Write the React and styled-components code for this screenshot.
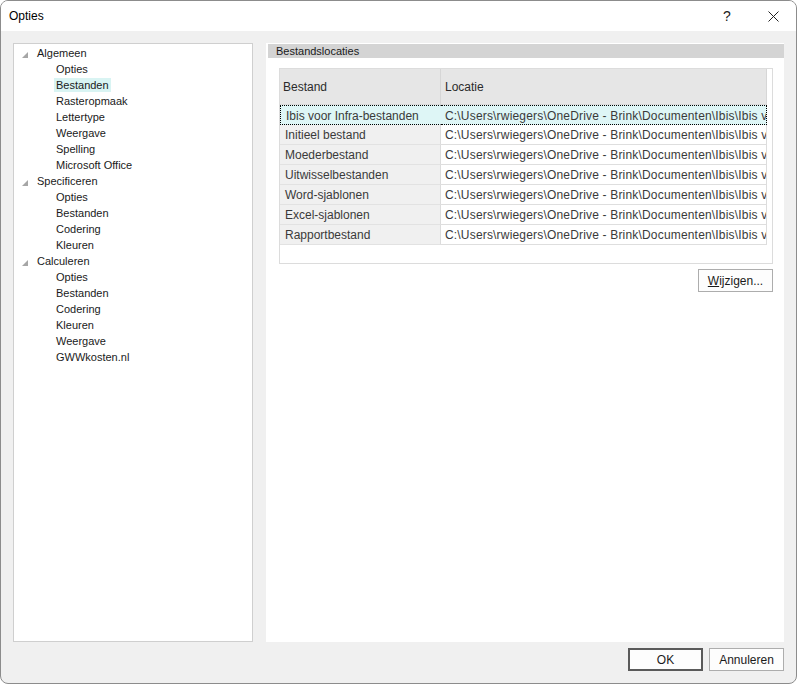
import React from "react"
import styled, {createGlobalStyle} from "styled-components"

const GlobalStyle = createGlobalStyle`
  html, body {
    margin: 0;
    padding: 0;
    background: #fff;
  }
  body {
    font-family: "Liberation Sans", Arial, sans-serif;
    font-size: 12px;
    color: #000;
  }
`

const Window = styled.div`
  box-sizing: border-box;
  width: 797px;
  height: 684px;
  display: flex;
  flex-direction: column;
  border: 1px solid #8c8c8c;
  border-radius: 8px;
  overflow: hidden;
  background: #f0f0f0;
`

const TitleBar = styled.div`
  height: 30px;
  flex: none;
  display: flex;
  align-items: center;
  padding-left: 8px;
  background: #fff;
`

const Title = styled.div`
  flex: 1;
  font-size: 12px;
  color: #000;
`

const TitleButton = styled.div`
  width: 46px;
  height: 30px;
  display: flex;
  align-items: center;
  justify-content: center;
  font-size: 14px;
  color: #222;
`

const Body = styled.div`
  flex: 1;
  display: flex;
  flex-direction: column;
  padding: 12px 12px 11px 12px;
  min-height: 0;
`

const Panels = styled.div`
  display: flex;
  gap: 13px;
  height: 599px;
`

const TreePanel = styled.div`
  box-sizing: border-box;
  width: 240px;
  height: 100%;
  background: #fff;
  border: 1px solid #cfcfcf;
  padding-top: 1px;
`

const TreeRow = styled.div`
  display: flex;
  align-items: center;
  height: 16px;
  padding-left: ${p => (p.child ? 40 : 8)}px;
  font-size: 11px;
  color: #1a1a1a;
`

const Expander = styled.span`
  width: 0;
  height: 0;
  margin-right: 7px;
  margin-top: 3px;
  border-left: 6px solid transparent;
  border-bottom: 6px solid #a6a6a6;
`

const TreeLabel = styled.span`
  padding: 1px 2px;
  background: ${p => (p.selected ? "#d9f4f3" : "transparent")};
`

const ContentPanel = styled.div`
  box-sizing: border-box;
  flex: 1;
  height: 100%;
  background: #fff;
  padding: 1px 0 0 2px;
  display: flex;
  flex-direction: column;
`

const SectionHeader = styled.div`
  height: 14px;
  line-height: 14px;
  background: #d4d4d4;
  padding-left: 8px;
  font-size: 11px;
  color: #1a1a1a;
`

const SectionBody = styled.div`
  padding: 10px 0 0 11px;
  display: flex;
  flex-direction: column;
`

const Grid = styled.div`
  box-sizing: border-box;
  width: 494px;
  height: 196px;
  border: 1px solid #dcdcdc;
  display: grid;
  grid-template-columns: 161px 326px;
  grid-auto-rows: 20px;
  grid-template-rows: 36px;
  align-content: start;
`

const HeaderCell = styled.div`
  background: #e6e6e6;
  border-right: 1px solid #d6d6d6;
  border-bottom: 1px solid #dadada;
  display: flex;
  align-items: center;
  padding-left: ${p => (p.first ? 3 : 4)}px;
  padding-top: 1px;
  font-size: 12px;
  color: #2b2b2b;
`

const Cell = styled.div`
  box-sizing: border-box;
  display: flex;
  align-items: center;
  white-space: nowrap;
  overflow: hidden;
  padding-left: ${p => (p.first ? 5 : 4)}px;
  padding-top: 1px;
  font-size: 12px;
  letter-spacing: ${p => (p.first ? 0 : 0.18)}px;
  color: #3a3a3a;
  background: ${p => (p.selected ? "#def6f6" : p.first ? "#f0f0f0" : "#fff")};
  border-bottom: 1px solid ${p => (p.first ? "#e2e2e2" : "#dedede")};
  border-right: 1px solid #dcdcdc;
  ${p =>
    p.selected &&
    `
    border-top: 1px dotted #000;
    border-bottom: 1px dotted #000;
    ${p.first ? "border-left: 1px dotted #000;" : ""}
    border-right: ${p.first ? "1px solid #def6f6" : "1px dotted #000"};
  `}
`

const ButtonRow = styled.div`
  display: flex;
  justify-content: flex-end;
  gap: 6px;
  padding-top: ${p => p.top || 0}px;
  padding-right: ${p => p.right || 0}px;
`

const Button = styled.div`
  box-sizing: border-box;
  width: 75px;
  height: 23px;
  display: flex;
  align-items: center;
  justify-content: center;
  background: #fdfdfd;
  border: ${p => (p.primary ? "2px solid #5a5a5a" : "1px solid #adadad")};
  font-size: 12px;
  color: #1a1a1a;

  u {
    text-decoration: underline;
  }
`

const tree = [
  {label: "Algemeen", children: ["Opties", "Bestanden", "Rasteropmaak", "Lettertype", "Weergave", "Spelling", "Microsoft Office"]},
  {label: "Specificeren", children: ["Opties", "Bestanden", "Codering", "Kleuren"]},
  {label: "Calculeren", children: ["Opties", "Bestanden", "Codering", "Kleuren", "Weergave", "GWWkosten.nl"]}
]

const path = "C:\\Users\\rwiegers\\OneDrive - Brink\\Documenten\\Ibis\\Ibis v"

const rows = [
  "Ibis voor Infra-bestanden",
  "Initieel bestand",
  "Moederbestand",
  "Uitwisselbestanden",
  "Word-sjablonen",
  "Excel-sjablonen",
  "Rapportbestand"
]

export default function App() {
  return (
    <>
      <GlobalStyle />
      <Window>
        <TitleBar>
          <Title>Opties</Title>
          <TitleButton>?</TitleButton>
          <TitleButton>
            <svg width="11" height="11" viewBox="0 0 11 11">
              <path d="M0.5 0.5 L10.5 10.5 M10.5 0.5 L0.5 10.5" stroke="#222" strokeWidth="1" />
            </svg>
          </TitleButton>
        </TitleBar>
        <Body>
          <Panels>
            <TreePanel>
              {tree.map((group, gi) => (
                <React.Fragment key={gi}>
                  <TreeRow>
                    <Expander />
                    <TreeLabel>{group.label}</TreeLabel>
                  </TreeRow>
                  {group.children.map((c, ci) => (
                    <TreeRow child key={ci}>
                      <TreeLabel selected={gi === 0 && ci === 1}>{c}</TreeLabel>
                    </TreeRow>
                  ))}
                </React.Fragment>
              ))}
            </TreePanel>
            <ContentPanel>
              <SectionHeader>Bestandslocaties</SectionHeader>
              <SectionBody>
                <Grid>
                  <HeaderCell first>Bestand</HeaderCell>
                  <HeaderCell>Locatie</HeaderCell>
                  {rows.map((r, i) => (
                    <React.Fragment key={i}>
                      <Cell first selected={i === 0}>{r}</Cell>
                      <Cell selected={i === 0}>{path}</Cell>
                    </React.Fragment>
                  ))}
                </Grid>
                <ButtonRow top={5} right={11}>
                  <Button>
                    <span><u>W</u>ijzigen...</span>
                  </Button>
                </ButtonRow>
              </SectionBody>
            </ContentPanel>
          </Panels>
          <ButtonRow top={6}>
            <Button primary>OK</Button>
            <Button>Annuleren</Button>
          </ButtonRow>
        </Body>
      </Window>
    </>
  )
}
